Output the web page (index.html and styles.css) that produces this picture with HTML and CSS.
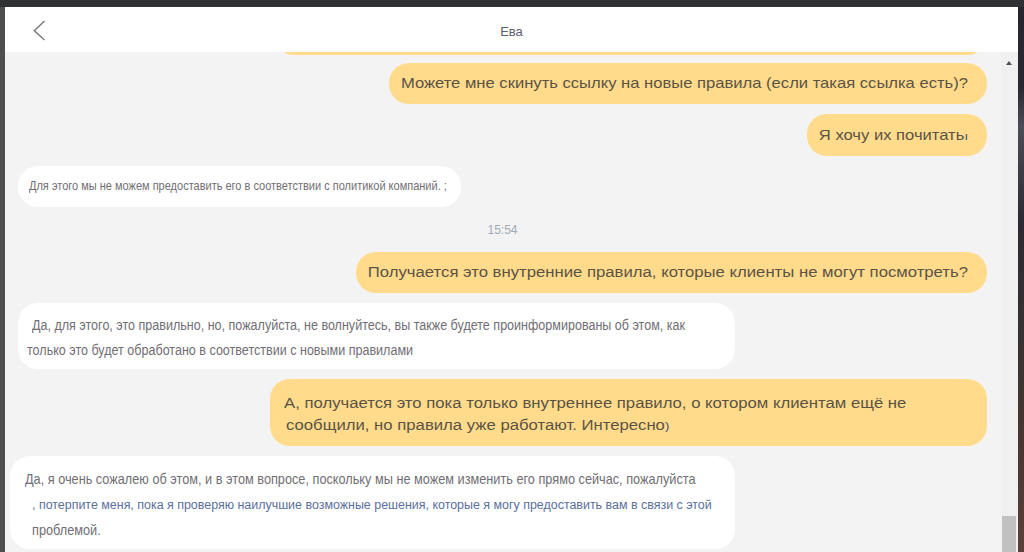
FILE: index.html
```html
<!DOCTYPE html>
<html lang="ru">
<head>
<meta charset="utf-8">
<title>Ева</title>
<link rel="stylesheet" href="styles.css">
</head>
<body>
<div class="topbar"></div>
<div class="row">
  <div class="lstrip"></div>
  <div class="window">
    <header class="head">
      <svg class="back" width="20" height="22" viewBox="0 0 20 22"><polyline points="17.5,2 7.3,11.8 17.5,21" fill="none" stroke="#7b7b7b" stroke-width="1.5"/></svg>
      <div class="title">Ева</div>
      <div></div>
    </header>
    <div class="chat">
      <div class="list">
        <div class="msg out cut"><div class="bubble wide"></div></div>
        <div class="msg out"><div class="bubble"><span class="t">Можете мне скинуть ссылку на новые правила (если такая ссылка есть)?</span></div></div>
        <div class="msg out"><div class="bubble"><span class="t">Я хочу их почитать<span class="tail">ı</span></span></div></div>
        <div class="msg in"><div class="bubble small"><span class="t">Для этого мы не можем предоставить его в соответствии с политикой компаний. <span class="blue">;</span></span></div></div>
        <div class="time">15:54</div>
        <div class="msg out"><div class="bubble wider"><span class="t">Получается это внутренние правила, которые клиенты не могут посмотреть?</span></div></div>
        <div class="msg in"><div class="bubble two">
          <span class="line ind">Да, для этого, это правильно, но, пожалуйста, не волнуйтесь, вы также будете проинформированы об этом, как</span>
          <span class="line">только это будет обработано в соответствии с новыми правилами</span>
        </div></div>
        <div class="msg out"><div class="bubble big">
          <span class="line">А, получается это пока только внутреннее правило, о котором клиентам ещё не</span>
          <span class="line ind2">сообщили, но правила уже работают. Интересно<span class="tail">)</span></span>
        </div></div>
        <div class="msg in"><div class="bubble three">
          <span class="line">Да, я очень сожалею об этом, и в этом вопросе, поскольку мы не можем изменить его прямо сейчас, пожалуйста</span>
          <span class="line ind blue tight">, потерпите меня, пока я проверяю наилучшие возможные решения, которые я могу предоставить вам в связи с этой</span>
          <span class="line ind">проблемой.</span>
        </div></div>
      </div>
      <div class="scrollbar">
        <div class="arrow"></div>
        <div class="thumb"></div>
      </div>
    </div>
  </div>
  <div class="rstrip"></div>
</div>
</body>
</html>
```
FILE: styles.css
```css
* { box-sizing: border-box; }
html, body { margin: 0; padding: 0; }
body {
  width: 1024px;
  height: 552px;
  overflow: hidden;
  background: #303134;
  font-family: "Liberation Sans", Arial, sans-serif;
}
.topbar { height: 7px; background: #303134; }
.row { display: flex; height: 545px; }
.lstrip { width: 5px; background: #4e4e4e; }
.rstrip {
  width: 6px;
  background: linear-gradient(180deg, #28262c 0%, #2a2833 15%, #4c4c58 22%, #2c2a30 40%, #3a3434 65%, #4a3630 80%, #5a4038 100%);
}
.window { width: 1013px; display: flex; flex-direction: column; }
.head {
  height: 45px;
  flex: none;
  background: #ffffff;
  display: grid;
  grid-template-columns: 1fr auto 1fr;
  align-items: center;
}
.back { margin-left: 22px; display: block; }
.title {
  font-size: 13px;
  color: #5f5e68;
  padding-top: 4px;
}
.chat {
  flex: 1;
  display: flex;
  background: #f2f3f2;
  overflow: hidden;
}
.list {
  flex: 1;
  display: flex;
  flex-direction: column;
  gap: 10px;
  padding: 0 14px 0 13px;
  margin-top: -38px;
}
.msg { display: flex; }
.out { justify-content: flex-end; }
.in { justify-content: flex-start; }
.cut { margin-bottom: -2px; }
.bubble {
  border-radius: 20px;
  padding: 8px 19px 8px 12px;
  line-height: 25px;
  font-size: 16.6px;
  max-width: 717px;
}
.t { display: inline-block; transform: scaleY(0.9); }
.line { display: block; white-space: nowrap; transform: scaleY(0.9); }
.out .bubble { background: #ffdb8b; color: #5b5345; }
.in .bubble {
  background: #ffffff;
  color: #716e74;
}
.in .t, .in .line { transform: scaleY(1.1); }
.wide { width: 713px; height: 41px; }
.wider { font-size: 16.72px; }
.blue { color: #5a6f9c; }
.tail { color: #3f4d6e; font-size: 13px; }
.small { font-size: 11px; padding: 8px 14px 8px 11px; }
.two {
  width: 717px;
  font-size: 12.55px;
  padding: 11px 10px 5px 9px;
}
.two .ind { padding-left: 5px; }
.big {
  width: 717px;
  font-size: 16.7px;
  line-height: 22px;
  padding: 13px 10px 9px 14px;
}
.big .ind2 { padding-left: 2px; }
.three {
  width: 725px;
  max-width: none;
  margin-left: -8px;
  font-size: 12.72px;
  line-height: 25.5px;
  padding: 11px 10px 5px 15px;
}
.three .ind { padding-left: 7px; }
.three .tight { font-size: 12.45px; }
.time {
  height: 25px;
  padding-top: 2px;
  line-height: 23px;
  text-align: center;
  font-size: 12px;
  color: #a0aab6;
}
.scrollbar {
  width: 17px;
  flex: none;
  background: #f0f0f0;
  display: flex;
  flex-direction: column;
  justify-content: space-between;
}
.arrow {
  width: 0;
  height: 0;
  margin: 9px 0 0 5px;
  border-left: 3.5px solid transparent;
  border-right: 3.5px solid transparent;
  border-bottom: 4px solid #505050;
}
.thumb {
  height: 36px;
  margin: 0 2px 0 1px;
  background: #c1c1c1;
}
```
